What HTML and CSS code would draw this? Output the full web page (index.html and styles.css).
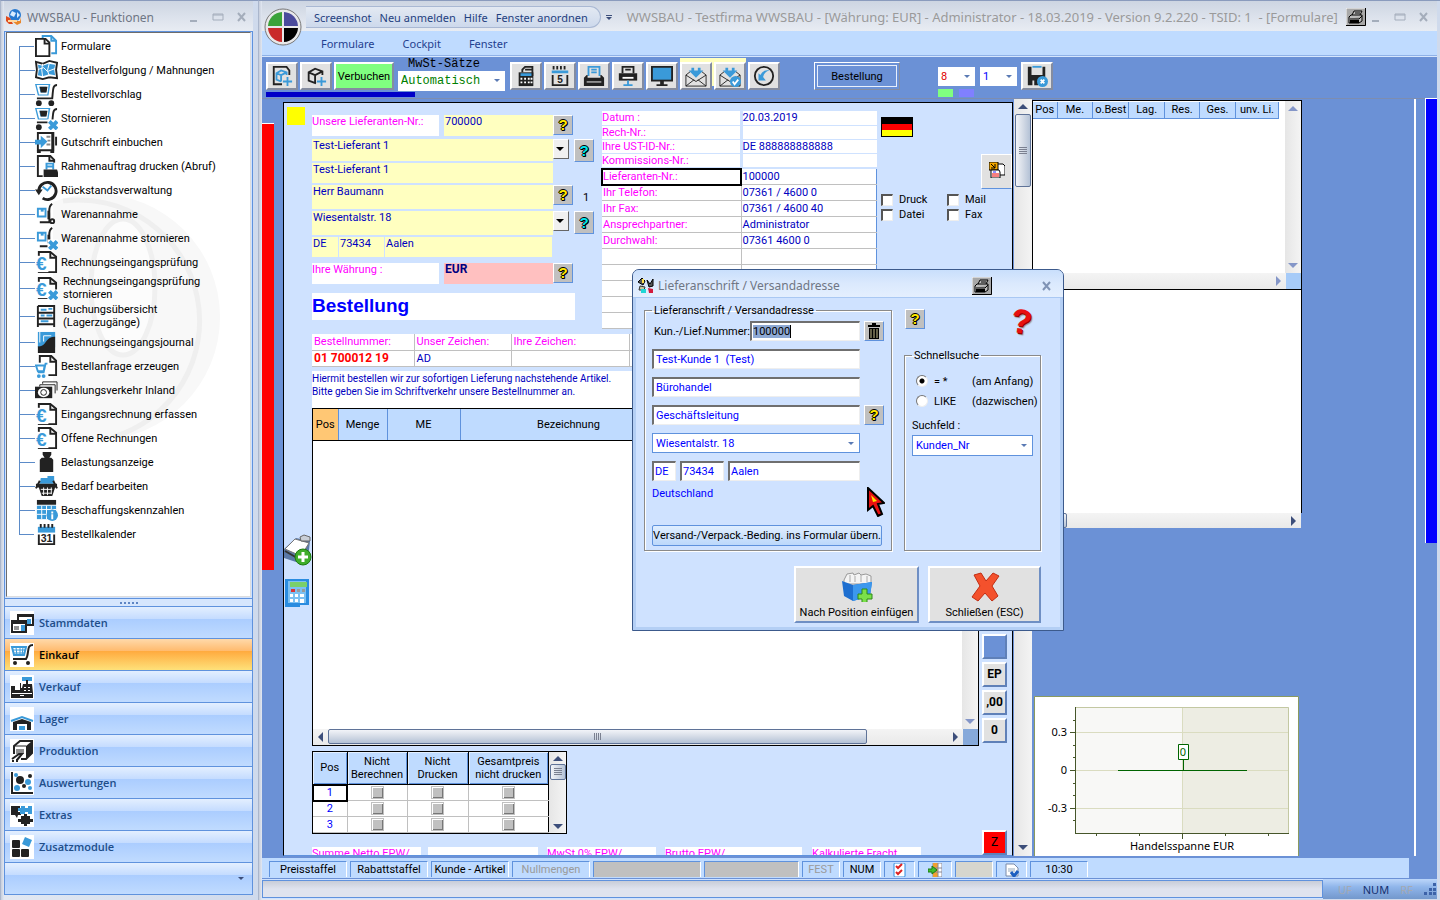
FILE: index.html
```html
<!DOCTYPE html>
<html lang="de">
<head>
    <meta charset="UTF-8">
    <meta name="viewport" content="width=device-width, initial-scale=1.0">
    <title>WWSBAU</title>
    <link rel="stylesheet" href="styles.css">
</head>
<body>
    <!-- Icon sprite -->
    <svg class="sprite" aria-hidden="true">
        <symbol id="i-docs" viewBox="0 0 24 24"><path class="bs" d="M8 3V1h9l5 5v13h-5"/><path class="bs" d="M17 1v5h5"/><path class="ws" d="M1 4h10l4 4v14H1z"/><path class="ds" d="M10 4v5h5"/></symbol>
        <symbol id="i-map" viewBox="0 0 24 24"><path class="ws" d="M1 3l7 2 7-3 8 2-1 7 1 9-8-1-7 2-7-2 1-8z"/><path class="b" d="M3 6l5 1 6-2 7 1-1 5 1 6-6-1-7 2-5-1 1-6z"/><path class="wl" d="M8 5l-1 6 1 8M15 4l-2 8 2 6M3 11l6-2 4 4 8-3"/></symbol>
        <symbol id="i-cart2" viewBox="0 0 24 24"><path class="b" d="M0 1h16l-2 12H3z"/><path class="wl2" d="M3 3h10l-1 8H5z"/><path class="d" d="M5 4h8l-1 6H6z"/><path class="ds" d="M23 2c-5 0-4 6-5 14H2"/><circle class="d" cx="4" cy="21" r="3"/><circle class="d" cx="17" cy="21" r="3"/></symbol>
        <symbol id="i-x" viewBox="0 0 24 24"><path class="w" d="M13 13h11v11H13z"/><path class="xs" d="M15 15l8 8M23 15l-8 8"/></symbol>
        <symbol id="i-credit" viewBox="0 0 24 24"><path class="ds" d="M3 2h16v18H3z"/><path class="d" d="M17 1h3v20h-3zM21 6h2v9h-2zM2 20h4v3H2zM16 20h4v3h-4z"/><path class="gl" d="M12 6h4M13 10h3M12 14h4"/><path class="b" d="M0 9h6V5l7 6-7 7v-4H0z"/></symbol>
        <symbol id="i-docprint" viewBox="0 0 24 24"><path class="ws" d="M3 1h13l4 4v17H3z"/><path class="ds" d="M15 1v5h5"/><path class="w" d="M8 8h16v16H8z"/><path class="bs" d="M12 15V9h7v6M13 12h5"/><path class="d" d="M9 15h14l1 3v5H9z"/></symbol>
        <symbol id="i-clock" viewBox="0 0 24 24"><path class="d3" d="M4 13a9 9 0 1 1 4 7"/><path class="d" d="M0 11h8l-4 6z"/><path class="bs" d="M8 8l5 4 4-5"/></symbol>
        <symbol id="i-truck" viewBox="0 0 24 24"><path class="bs" d="M3 6h8v8H3z"/><path class="b" d="M6 6h3v3H6z"/><path class="ds" d="M18 1c-4 2-3 6-3 10v9H5"/><path class="ds" d="M14 8v9"/><circle class="ds" cx="18" cy="19" r="2"/></symbol>
        <symbol id="i-euro" viewBox="0 0 24 24"><path class="ws" d="M4 1h12l6 5v16H4z"/><path class="ds" d="M16 1v6h6"/><path class="w" d="M1 5h13v17H1z"/></symbol>
        <symbol id="i-rack" viewBox="0 0 24 24"><path class="ws" d="M3 1h17v22M3 1v22M3 8h17M3 14h17M3 20h17"/><path class="bs" d="M6 5h6M14 4h4M6 11h4M12 11h6M6 17h8"/></symbol>
        <symbol id="i-journal" viewBox="0 0 24 24"><path class="b" d="M3 1h18v16H3z"/><path class="wl" d="M5 1v11M9 5h8M9 5v6"/><path class="d" d="M3 16c9 1 8-11 18-10v17H3z"/></symbol>
        <symbol id="i-cartdoc" viewBox="0 0 24 24"><path class="ws" d="M5 1h12l5 5v15H5z"/><path class="ds" d="M16 1v6h6"/><path class="w" d="M0 8h14v16H0z"/><path class="bs" d="M1 11h9l-1 6H3zM13 9h-2l-2 9H3"/><circle class="b" cx="4" cy="22" r="2"/><circle class="b" cx="9" cy="22" r="2"/></symbol>
        <symbol id="i-money" viewBox="0 0 24 24"><path class="dl" d="M5 8V6h16v9M8 5V3h15v9"/><path class="d" d="M0 8h18v12H0z"/><ellipse class="w" cx="9" cy="14" rx="6" ry="5"/><circle class="dl" cx="9" cy="14" r="3"/></symbol>
        <symbol id="i-weight" viewBox="0 0 24 24"><path class="d" d="M8 1h9v3l-2 3h2l2 2v13H5V9l2-2h3L8 4z"/></symbol>
        <symbol id="i-basket" viewBox="0 0 24 24"><path class="b" d="M6 3h7V1h7v8H5z"/><path class="ds" d="M5 6l-4 8M19 6l4 8"/><path class="d" d="M1 9h22v4H1zM4 13h17l-3 9H7z"/><path class="wl" d="M6 15h12M7 19h10M9 13v8M13 13v8M17 13v7"/></symbol>
        <symbol id="i-table" viewBox="0 0 24 24"><path class="d" d="M2 1h20v5H2z"/><path class="b" d="M2 7h20v14H2z"/><path class="wl" d="M2 11h20M2 16h20M7 7v14M12 7v14M17 7v14"/><circle class="b" cx="18" cy="17" r="6"/></symbol>
        <symbol id="i-cal" viewBox="0 0 24 24"><path class="b" d="M3 4h18v6H3z"/><path class="ds" d="M6 1v4M10 1v4M14 1v4M18 1v4M4 12v10h16V12"/></symbol>
        <symbol id="i-cards" viewBox="0 0 24 24"><path class="ws" d="M8 4h15v10H8z"/><path class="d" d="M8 3h15v3H8z"/><path class="b" d="M17 8h4v5h-4z"/><path class="ws" d="M2 10h14v11H2z"/><path class="d" d="M2 10h14v3H2z"/><path class="b" d="M11 14h4v6h-4z"/><path class="dl" d="M4 16h5M4 18h5"/></symbol>
        <symbol id="i-cart" viewBox="0 0 24 24"><path class="bs" d="M2 4h14l-2 8H4z"/><path class="bl" d="M3 7h12M4 10h11M6 4l1 9M10 4v9M13 4l-1 9"/><path class="ds" d="M23 2c-6 0-4 5-6 12l-1 2H3"/><circle class="d" cx="5" cy="20" r="2"/><circle class="d" cx="18" cy="20" r="2"/></symbol>
        <symbol id="i-register" viewBox="0 0 24 24"><path class="bs" d="M13 3h8v2h-8z"/><path class="d" d="M16 5h2v4h-2zM1 11h5V8h5v5h1l1-4h9l1 9v5H1z"/><path class="w" d="M5 6h5v9H5zM14 12h2v1h-2zM18 12h2v1h-2zM14 15h2v1h-2zM18 15h2v1h-2zM2 18h20v1H2zM10 20h4v1h-4z"/></symbol>
        <symbol id="i-house" viewBox="0 0 24 24"><path class="bs" d="M1 14l11-4 11 4"/><path class="d" d="M3 15l9-3 9 3v8H3z"/><path class="w" d="M7 17h10v6H7z"/><path class="b" d="M9 19h6v4H9z"/></symbol>
        <symbol id="i-machine" viewBox="0 0 24 24"><path class="ws" d="M4 7l6-5h12v12l-6 6H4z"/><path class="d" d="M16 7l6-5v12l-6 6z"/><path class="dl" d="M4 7h12"/><path class="dl" d="M7 10v5M9 10v5M11 10v5M13 10v5"/><path class="w" d="M1 15h10v9H1z"/><path class="ds" d="M2 20l7-5h3l-5 6M3 21v2M7 20v3"/></symbol>
        <symbol id="i-bubbles" viewBox="0 0 24 24"><path class="ds" d="M2 1v21h21"/><circle class="d" cx="10" cy="9" r="4"/><circle class="b" cx="6" cy="4" r="2"/><circle class="b" cx="18" cy="11" r="3"/><circle class="d" cx="14" cy="15" r="2"/><circle class="b" cx="7" cy="17" r="3"/><circle class="d" cx="20" cy="5" r="2"/><circle class="b" cx="20" cy="17" r="2"/></symbol>
        <symbol id="i-puzzle" viewBox="0 0 24 24"><path class="d" d="M1 3h9v3h-2v3h3v3H8l-1 3-2-3H1z"/><path class="b" d="M11 3h4v2h3V3h4v8h-4V9h-3v2h-5V8H8V5h3z"/><path class="d" d="M11 13h3v-2h3v2h3v3h3v3h-3v2h-3v2h-3v-2h-3v-2H8v-3h3z"/></symbol>
        <symbol id="i-blocks" viewBox="0 0 24 24"><rect class="d" x="2" y="5" width="8" height="8" rx="1"/><rect class="d" x="2" y="14" width="8" height="8" rx="1"/><rect class="d" x="11" y="14" width="8" height="8" rx="1"/><path class="b" d="M15 2l7 3-3 7-7-3z"/></symbol>
        <symbol id="i-box" viewBox="0 0 24 24"><path class="ds" d="M12 20L4 17V8l7-4 8 3v4M4 8l7 3v8M11 11l8-4"/><path class="bs" d="M18 13v10M13 18h10"/></symbol>
        <symbol id="i-boxdoc" viewBox="0 0 24 24"><path class="ds" d="M12 21H3V2h14l3 4v5"/><path class="bs" d="M11 18l-5-2V9l5-3 6 2v3M6 9l5 2v7M11 11l6-3M18 13v10M13 18h10"/></symbol>
        <symbol id="i-calc" viewBox="0 0 24 24"><path class="ds" d="M8 8V5l3-3h8v10M11 5h7"/><path class="d" d="M4 8h16v15H4z"/><path class="b" d="M6 9h12v3H6z"/><path class="w" d="M6 14h2v2H6zM10 14h2v2h-2zM14 14h2v2h-2zM6 18h2v2H6zM10 18h2v2h-2zM14 18h2v2h-2zM17 14h2v2h-2zM17 18h2v2h-2z"/></symbol>
        <symbol id="i-cal5" viewBox="0 0 24 24"><path class="b" d="M3 6h18v3H3z"/><path class="ds" d="M5 1v4M9 1v4M13 1v4M17 1v4M4 11v11h16V11"/></symbol>
        <symbol id="i-printer" viewBox="0 0 24 24"><path class="bs" d="M6 12V2h12v10M9 5h6M9 8h6"/><path class="d" d="M4 11h1v3h14v-3h1l3 3v9H1v-9z"/><path class="w" d="M4 18h16v1H4z"/></symbol>
        <symbol id="i-netprint" viewBox="0 0 24 24"><path class="ds" d="M6 9V2h12v7M9 5h6"/><path class="d" d="M2 9h20v8H2z"/><path class="w" d="M6 13h12v2H6z"/><path class="bs" d="M12 17v6M7 22h10"/></symbol>
        <symbol id="i-monitor" viewBox="0 0 24 24"><path class="d" d="M0 1h24v17H0zM10 18h4v3h4v2H6v-2h4z"/><path class="b" d="M2 3h20v13H2z"/></symbol>
        <symbol id="i-mail" viewBox="0 0 24 24"><path class="dm" d="M6 7L1 11v12h22V11l-5-4M1 11l11 7 11-7M1 23l9-7M23 23l-9-7"/><path class="b" d="M7 3h3v3h4V3h3v3h3l-8 8-8-8h3z"/></symbol>
        <symbol id="i-check" viewBox="0 0 24 24"><circle class="b" cx="18" cy="18" r="6"/><path class="wl2" d="M15 18l2 3 4-5"/></symbol>
        <symbol id="i-back" viewBox="0 0 24 24"><circle class="ds" cx="12" cy="12" r="10"/><path class="b" d="M6 9l2 2c3-5 6-6 10-5-4 1-6 3-7 7l3 4H6z"/></symbol>
        <symbol id="i-save" viewBox="0 0 24 24"><path class="d" d="M2 2h4v9h12V2h3v12l-8 8H9v-5H7v5H2z"/><path class="bs" d="M7 2h10"/><circle class="b" cx="18" cy="18" r="6"/><path class="wl2" d="M16 16l4 4M20 16l-4 4"/></symbol>
        <symbol id="i-stamp" viewBox="0 0 20 18"><path d="M0 0h20v18H0z" fill="#a8a8a8"/><path d="M0 17V0h20" fill="none" stroke="#fff"/><path d="M6 7l2-4h8l-2 4M9 5h5M3 9l2-2h11v6l-3 2H3zM4 11h9l3-3" fill="#bbb" stroke="#000"/><path d="M4 12h9v3H4z"/><path d="M0 17.500h19.500V0" fill="none" stroke="#000"/></symbol>
    </svg>

    <!-- Function tree window -->
    <aside class="window functions">
        <header class="titlebar">
            <svg class="globe" viewBox="0 0 16 16"><circle cx="9" cy="6" r="6" fill="#2779d0"/><path d="M6 2l4 2-2 4-4-2zM11 3l3 3-3 3z" fill="#d8ecff"/><path d="M0 7l4 2 3 6H3L0 12z" fill="#e04a1c"/><path d="M6 12h8l1-4v6l-4 2z" fill="#e9862a"/><path d="M2 11h9v2H2z" fill="#ffd9a0"/></svg>
            <h1>WWSBAU - Funktionen</h1>
            <div class="winbtns"><button aria-label="Minimieren"><svg viewBox="0 0 12 12"><path d="M2 10h7" /></svg></button><button aria-label="Maximieren"><svg viewBox="0 0 12 12"><path class="thin" d="M1 3h10v6H1zM1 4h10"/></svg></button><button aria-label="Schließen"><svg viewBox="0 0 12 12"><path d="M2 2l7 8M9 2l-7 8"/></svg></button></div>
        </header>
        <div class="functions-body">
            <div class="tree-panel">
                <svg class="watermark" viewBox="0 0 170 260"><circle cx="44" cy="130" r="123" fill="#f8f8f8"/><path d="M10 14A121 121 0 0 1 60 250" fill="none" stroke="#efefef" stroke-width="5"/><ellipse cx="70" cy="100" rx="32" ry="68" fill="#fcfcfc" stroke="#f0f0f0" stroke-width="5"/></svg>
                <ul class="tree">
                    <li><svg><use href="#i-docs"/></svg><a href="#">Formulare</a></li>
                    <li><svg><use href="#i-map"/></svg><a href="#">Bestellverfolgung / Mahnungen</a></li>
                    <li><svg><use href="#i-cart2"/></svg><a href="#">Bestellvorschlag</a></li>
                    <li><svg><use href="#i-cart2"/><use href="#i-x"/></svg><a href="#">Stornieren</a></li>
                    <li><svg><use href="#i-credit"/></svg><a href="#">Gutschrift einbuchen</a></li>
                    <li><svg><use href="#i-docprint"/></svg><a href="#">Rahmenauftrag drucken (Abruf)</a></li>
                    <li><svg><use href="#i-clock"/></svg><a href="#">Rückstandsverwaltung</a></li>
                    <li><svg><use href="#i-truck"/></svg><a href="#">Warenannahme</a></li>
                    <li><svg><use href="#i-truck"/><use href="#i-x"/></svg><a href="#">Warenannahme stornieren</a></li>
                    <li><svg viewBox="0 0 24 24"><use href="#i-euro"/><text class="bt" x="1" y="20">€</text></svg><a href="#">Rechnungseingangsprüfung</a></li>
                    <li class="double"><svg viewBox="0 0 24 24"><use href="#i-euro"/><text class="bt" x="1" y="20">€</text><use href="#i-x"/></svg><a href="#">Rechnungseingangsprüfung<br>stornieren</a></li>
                    <li class="double"><svg><use href="#i-rack"/></svg><a href="#">Buchungsübersicht<br>(Lagerzugänge)</a></li>
                    <li><svg><use href="#i-journal"/></svg><a href="#">Rechnungseingangsjournal</a></li>
                    <li><svg><use href="#i-cartdoc"/></svg><a href="#">Bestellanfrage erzeugen</a></li>
                    <li><svg><use href="#i-money"/></svg><a href="#">Zahlungsverkehr Inland</a></li>
                    <li><svg viewBox="0 0 24 24"><use href="#i-euro"/><text class="bt" x="1" y="20">€</text></svg><a href="#">Eingangsrechnung erfassen</a></li>
                    <li><svg viewBox="0 0 24 24"><use href="#i-euro"/><text class="bt" x="1" y="20">€</text></svg><a href="#">Offene Rechnungen</a></li>
                    <li><svg><use href="#i-weight"/></svg><a href="#">Belastungsanzeige</a></li>
                    <li><svg><use href="#i-basket"/></svg><a href="#">Bedarf bearbeiten</a></li>
                    <li><svg viewBox="0 0 24 24"><use href="#i-table"/><path class="wl2" d="M18 16v5M18 13v2"/></svg><a href="#">Beschaffungskennzahlen</a></li>
                    <li><svg viewBox="0 0 24 24"><use href="#i-cal"/><text class="dt" x="6" y="20">31</text></svg><a href="#">Bestellkalender</a></li>
                </ul>
            </div>
            <div class="splitter"><i></i><i></i><i></i><i></i><i></i></div>
            <nav class="modules">
                <a href="#"><svg><use href="#i-cards"/></svg>Stammdaten</a>
                <a href="#" class="active"><svg><use href="#i-cart"/></svg>Einkauf</a>
                <a href="#"><svg><use href="#i-register"/></svg>Verkauf</a>
                <a href="#"><svg><use href="#i-house"/></svg>Lager</a>
                <a href="#"><svg><use href="#i-machine"/></svg>Produktion</a>
                <a href="#"><svg><use href="#i-bubbles"/></svg>Auswertungen</a>
                <a href="#"><svg><use href="#i-puzzle"/></svg>Extras</a>
                <a href="#"><svg><use href="#i-blocks"/></svg>Zusatzmodule</a>
                <div class="modules-foot"><span class="tri down small"></span></div>
            </nav>
        </div>
    </aside>

    <!-- Main window -->
    <main class="window main">
        <svg class="orb" viewBox="0 0 38 38"><circle cx="19" cy="19" r="18" fill="#e8e8ea" stroke="#777"/><path d="M18 4v14H4A15 15 0 0 1 18 4z" fill="#3ba23a"/><path d="M20 4v14h14A15 15 0 0 0 20 4z" fill="#4a4a9c"/><path d="M18 34V20H4a15 15 0 0 0 14 14z" fill="#c92a2a"/><path d="M20 34V20h14a15 15 0 0 1-14 14z"/></svg>
        <header class="titlebar">
            <nav class="quick">
                <a href="#">Screenshot</a><a href="#">Neu anmelden</a><a href="#">Hilfe</a><a href="#">Fenster anordnen</a>
            </nav>
            <span class="quick-more"><span class="tri down small"></span></span>
            <h1>WWSBAU - Testfirma WWSBAU - [Währung: EUR] - Administrator - 18.03.2019 - Version 9.2.220 - TSID: 1 &nbsp;- [Formulare]</h1>
            <svg class="stamp"><use href="#i-stamp"/></svg>
            <div class="winbtns"><button aria-label="Minimieren"><svg viewBox="0 0 12 12"><path d="M2 10h7" /></svg></button><button aria-label="Maximieren"><svg viewBox="0 0 12 12"><path class="thin" d="M1 3h10v6H1zM1 4h10"/></svg></button><button aria-label="Schließen"><svg viewBox="0 0 12 12"><path d="M2 2l7 8M9 2l-7 8"/></svg></button></div>
        </header>
        <nav class="menubar">
            <a href="#">Formulare</a><a href="#">Cockpit</a><a href="#">Fenster</a>
        </nav>

        <div class="toolbar">
            <div class="tool-group">
                <button class="tool" aria-label="Artikelbeleg neu"><svg><use href="#i-boxdoc"/></svg></button>
                <button class="tool" aria-label="Artikel neu"><svg><use href="#i-box"/></svg></button>
                <button class="tool book">Verbuchen</button>
                <div class="progress"></div>
            </div>
            <div class="vat">
                <label for="vat">MwSt-Sätze</label>
                <div class="select"><select id="vat"><option>Automatisch</option></select></div>
            </div>
            <div class="tool-group">
                <button class="tool" aria-label="Rechner"><svg><use href="#i-calc"/></svg></button>
                <button class="tool" aria-label="Kalender"><svg viewBox="0 0 24 24"><use href="#i-cal5"/><text class="dt" x="9" y="20">5</text></svg></button>
                <button class="tool" aria-label="Drucken"><svg><use href="#i-printer"/></svg></button>
                <button class="tool" aria-label="Netzwerkdruck"><svg><use href="#i-netprint"/></svg></button>
                <button class="tool" aria-label="Vorschau"><svg><use href="#i-monitor"/></svg></button>
                <button class="tool marked" aria-label="Mail"><svg><use href="#i-mail"/></svg></button>
                <button class="tool marked" aria-label="Mail senden"><svg><use href="#i-mail"/><use href="#i-check"/></svg></button>
                <button class="tool" aria-label="Zurück"><svg><use href="#i-back"/></svg></button>
            </div>
            <button class="order-type">Bestellung</button>
            <div class="counters">
                <div class="select red"><select aria-label="Anzahl"><option>8</option></select></div>
                <div class="select"><select aria-label="Kopien"><option>1</option></select></div>
                <div class="chips"><i class="green"></i><i class="violet"></i></div>
            </div>
            <button class="tool" aria-label="Speichern und schließen"><svg><use href="#i-save"/></svg></button>
        </div>

        <div class="workspace">
            <div class="gutter"><div class="redbar"></div></div>
            <section class="form">
                <div class="form-top">
                    <div class="marker"></div>
                    <div class="address">
                        <div class="row h24"><span class="lbl">Unsere Lieferanten-Nr.:</span><span class="fld mid">700000</span><button class="hint">?</button></div>
                        <div class="row h24"><span class="fld full">Test-Lieferant 1</span><button class="drop" aria-label="Auswahl"><span class="tri down"></span></button><button class="hint cyan">?</button></div>
                        <div class="row h22"><span class="fld full">Test-Lieferant 1</span></div>
                        <div class="row h26"><span class="fld full">Herr Baumann</span><button class="hint">?</button><span class="count">1</span></div>
                        <div class="row h26"><span class="fld full">Wiesentalstr. 18</span><button class="drop" aria-label="Auswahl"><span class="tri down"></span></button><button class="hint cyan">?</button></div>
                        <div class="row city"><span class="fld">DE</span><span class="fld">73434</span><span class="fld">Aalen</span></div>
                        <div class="row currency"><span class="lbl">Ihre Währung :</span><span class="fld mid pink">EUR</span><button class="hint">?</button></div>
                        <h2>Bestellung</h2>
                    </div>
                    <div class="info">
                        <table class="info-a">
                            <tr><th>Datum :</th><td>20.03.2019</td></tr>
                            <tr><th>Rech-Nr.:</th><td></td></tr>
                            <tr><th>Ihre UST-ID-Nr.:</th><td>DE 888888888888</td></tr>
                            <tr><th>Kommissions-Nr.:</th><td></td></tr>
                        </table>
                        <table class="info-b">
                            <tr><th class="focus">Lieferanten-Nr.:</th><td>100000</td></tr>
                            <tr><th>Ihr Telefon:</th><td>07361 / 4600 0</td></tr>
                            <tr><th>Ihr Fax:</th><td>07361 / 4600 40</td></tr>
                            <tr><th>Ansprechpartner:</th><td>Administrator</td></tr>
                            <tr><th>Durchwahl:</th><td>07361 4600 0</td></tr>
                            <tr><th></th><td></td></tr>
                            <tr><th></th><td></td></tr>
                            <tr><th></th><td></td></tr>
                            <tr><th></th><td></td></tr>
                            <tr><th></th><td></td></tr>
                        </table>
                    </div>
                    <div class="side">
                        <div class="flag"><i></i><i></i><i></i></div>
                        <button class="docbtn" aria-label="Beleg kopieren"><svg viewBox="0 0 16 16"><path d="M6 2h8l2 2v9h-6z" fill="#fff" stroke="#000"/><path d="M0 0h9v8H0z" fill="#f5a800" stroke="#000"/><path d="M2 2l4 4M6 2v4H2" stroke="#000" fill="none"/><path d="M2 8h8l1 2v6H2z" fill="#fff" stroke="#000"/><path d="M3 12h7M3 14h7" stroke="#e00"/><path d="M4 10h3" stroke="#22f"/></svg></button>
                        <div class="checks">
                            <label><input type="checkbox">Druck</label><label><input type="checkbox">Mail</label>
                            <label><input type="checkbox">Datei</label><label><input type="checkbox">Fax</label>
                        </div>
                    </div>
                </div>
                <div class="form-main">
                    <div class="form-icons">
                        <svg viewBox="0 0 28 32"><path d="M0 15L12 4l14 3-2 18-12 3L0 24z" fill="#5b79a8"/><path d="M1 15L11 5l14 4-8 13z" fill="#fff" stroke="#777"/><path d="M16 3l4-2 6 2v4h-9z" fill="#c9ced6" stroke="#666"/><path d="M1 17l14 8" stroke="#333" stroke-width="2"/><circle cx="19" cy="23" r="8" fill="#3fae2a" stroke="#1d7a12"/><path d="M19 18v10M14 23h10" stroke="#fff" stroke-width="3"/></svg>
                        <svg viewBox="0 0 24 28"><path d="M0 0h24v26H15v2H0z" fill="#2a8ce0"/><path d="M3 2h18v22H3z" fill="#7cc0f2"/><path d="M5 3h17v5H5z" fill="#7ad06a"/><path d="M6 10h4v3H6z" fill="#d33"/><path d="M12 10h3v3h-3zM17 10h3v3h-3z" fill="#9a9a9a"/><path d="M5 15h3v3H5zM10 15h3v3h-3zM15 15h4v3h-4zM5 20h3v3H5zM10 20h3v3h-3zM15 20h4v4h-4z" fill="#fff"/></svg>
                    </div>
                    <div class="form-content">
                        <table class="refs">
                            <tr><th>Bestellnummer:</th><th>Unser Zeichen:</th><th>Ihre Zeichen:</th><th></th></tr>
                            <tr><td class="strong">01 700012 19</td><td>AD</td><td></td><td></td></tr>
                        </table>
                        <p class="intro">Hiermit bestellen wir zur sofortigen Lieferung nachstehende Artikel.<br>Bitte geben Sie im Schriftverkehr unsere Bestellnummer an.</p>
                        <div class="items">
                            <table>
                                <tr><th class="pos">Pos</th><th class="qty">Menge</th><th class="unit">ME</th><th class="name">Bezeichnung</th><th></th></tr>
                            </table>
                            <div class="items-body"><div class="vbar"><span></span><span class="tri down pale"></span></div></div>
                            <div class="hbar"><span class="tri left"></span><div class="thumb"><i></i></div><span class="tri right"></span><b></b></div>
                        </div>
                        <div class="flags">
                            <table>
                                <tr><th class="f-pos">Pos</th><th class="f-a">Nicht<br>Berechnen</th><th class="f-b">Nicht<br>Drucken</th><th class="f-c">Gesamtpreis<br>nicht drucken</th></tr>
                                <tr><td class="focus">1</td><td><input type="checkbox" aria-label="1 nicht berechnen"></td><td><input type="checkbox" aria-label="1 nicht drucken"></td><td><input type="checkbox" aria-label="1 Gesamtpreis"></td></tr>
                                <tr><td>2</td><td><input type="checkbox" aria-label="2 nicht berechnen"></td><td><input type="checkbox" aria-label="2 nicht drucken"></td><td><input type="checkbox" aria-label="2 Gesamtpreis"></td></tr>
                                <tr><td>3</td><td><input type="checkbox" aria-label="3 nicht berechnen"></td><td><input type="checkbox" aria-label="3 nicht drucken"></td><td><input type="checkbox" aria-label="3 Gesamtpreis"></td></tr>
                            </table>
                            <div class="vbar dark"><span class="tri up"></span><div class="thumb short"><i></i></div><span class="tri down"></span></div>
                        </div>
                        <div class="sums"><span>Summe Netto EPW/</span><span></span><span>MwSt 0% EPW/</span><span>Brutto EPW/</span><span>Kalkulierte Fracht</span></div>
                    </div>
                    <div class="form-side">
                        <button class="sq blue" aria-label="Farbe"></button>
                        <button class="sq">EP</button>
                        <button class="sq">,00</button>
                        <button class="sq">0</button>
                        <button class="sq redsq">Z</button>
                    </div>
                </div>
            </section>
            <div class="vbar main-scroll dark"><span class="tri up"></span><div class="thumb"><i></i></div><span class="tri down"></span></div>
            <section class="stock">
                <div class="stock-table">
                    <div class="stock-area">
                        <table><tr><th>Pos</th><th>Me.</th><th>o.Best</th><th>Lag.</th><th>Res.</th><th>Ges.</th><th>unv. Li.</th></tr></table>
                        <div class="vbar"><span class="tri up pale"></span><span class="tri down pale"></span></div>
                    </div>
                    <div class="hbar"><span class="tri right pale"></span><b></b></div>
                </div>
                <div class="stock-blank"></div>
                <div class="hbar stock-scroll"><div class="thumb"></div><span class="tri right"></span></div>
                <svg class="chart" viewBox="0 0 265 160">
                    <path d="M0.500 160V0.500h264V160" fill="#fff" stroke="#8a9a5f"/>
                    <path d="M41 11h108v126H41z" fill="#f8f8f6"/><path d="M149 11h106v126H149z" fill="#edede3"/>
                    <path d="M41 36.500h214M41 74.500h214M41 112.500h214M148.500 11v126" stroke="#dadcc0"/>
                    <path d="M41 11.500h213.500V137" fill="none" stroke="#c3c8a2"/>
                    <path d="M41.500 11v126M41 137.500h214M36 36.500h5M36 74.500h5M36 112.500h5M39 24.500h2M39 49.500h2M39 61.500h2M39 87.500h2M39 99.500h2M39 124.500h2M62.500 137v3M105.500 137v3M148.500 137v6M191.500 137v3M234.500 137v3" stroke="#46562a"/>
                    <path d="M84 74.500h129M149.500 63v11" stroke="#006400"/>
                    <path d="M144.500 48.500h10v15h-10z" fill="#fff" stroke="#006400"/>
                    <text x="149" y="60" text-anchor="middle" class="green">0</text>
                    <text x="33" y="40" text-anchor="end">0.3</text><text x="33" y="78" text-anchor="end">0</text><text x="33" y="116" text-anchor="end">-0.3</text>
                    <text x="148" y="154" text-anchor="middle">Handelsspanne EUR</text>
                </svg>
            </section>
            <div class="edge"><div class="bluebar"></div></div>
        </div>

        <div class="tabs">
            <button class="w78">Preisstaffel</button>
            <button class="w78">Rabattstaffel</button>
            <button class="w78">Kunde - Artikel</button>
            <button class="w78" disabled>Nullmengen</button>
            <span class="cell w108 gray"></span>
            <span class="cell w95 gray"></span>
            <span class="cell w38 off">FEST</span>
            <span class="cell w38">NUM</span>
            <span class="cell w31"><svg viewBox="0 0 14 14"><rect x="1" y="0" width="11" height="14" rx="1" fill="#fff" stroke="#2a8ce0"/><path d="M3 3l2 2 4-4M3 9l2 2 4-4" stroke="#d22" stroke-width="2" fill="none"/></svg></span>
            <span class="cell w34"><svg viewBox="0 0 14 14"><path d="M5 0h9v14H5z" fill="#fff" stroke="#889"/><path d="M5 0h5v14H5z" fill="#f0a030"/><path d="M10 0v14M5 5h9M5 9h9" stroke="#889"/><path d="M0 6h4V3l5 4-5 4V9H0z" fill="#3fbf2f" stroke="#1d7a12"/></svg></span>
            <span class="cell w38 beige"></span>
            <span class="cell w31"><svg viewBox="0 0 14 14"><path d="M1 1h8l4 4v8H1z" fill="#fff" stroke="#7a8aa8"/><path d="M3 6h7M3 8h7" stroke="#9ab"/><path d="M6 9l3 4 4-5" stroke="#1c5fc0" stroke-width="3" fill="none"/></svg></span>
            <span class="cell w58">10:30</span>
        </div>
        <footer class="status">
            <div class="message"></div>
            <div class="keys"><span class="dim">UF</span><span>NUM</span><span class="dim">RF</span><svg viewBox="0 0 12 12"><path d="M9 0h3v3H9zM5 5h3v3H5zM9 5h3v3H9zM0 9h3v3H0zM5 9h3v3H5zM9 9h3v3H9z" fill="#3c62a8"/></svg></div>
        </footer>
    </main>

    <!-- Delivery address dialog -->
    <div class="dialog" role="dialog" aria-labelledby="dialog-title">
        <header class="dialog-title">
            <svg class="dlgicon" viewBox="0 0 16 16"><path d="M0 4l4-4 3 3-2 4zM9 2l3 4 3-5v7l-4 1z" fill="#555" stroke="#000"/><path d="M2 8l5 1-1 3H1z" fill="#c9c9a0" stroke="#333"/><path d="M3 11h5v4H3z" fill="#1fd6d6"/><path d="M10 10l5 1v4h-4z" fill="#d31a3c"/><path d="M4 1h2v4H4z" fill="#ffe34a"/></svg>
            <h2 id="dialog-title">Lieferanschrift / Versandadresse</h2>
            <svg class="stamp"><use href="#i-stamp"/></svg>
            <button class="close" aria-label="Schließen"><svg viewBox="0 0 12 12"><path d="M2 2l7 8M9 2l-7 8"/></svg></button>
        </header>
        <div class="dialog-body">
            <fieldset class="addr">
                <legend>Lieferanschrift / Versandadresse</legend>
                <div class="line first"><label for="nr">Kun.-/Lief.Nummer:</label><div class="input num"><mark>100000</mark><input id="nr" type="text"></div><button class="hint" aria-label="Löschen"><svg viewBox="0 0 14 16"><path d="M5 0h4v2h4v2H1V2h4zM2 5h10v11H2z"/><path d="M4 6v9M7 6v9M10 6v9" stroke="#c8c090"/></svg></button></div>
                <div class="line"><input class="input" type="text" value="Test-Kunde 1  (Test)" aria-label="Name"></div>
                <div class="line"><input class="input" type="text" value="Bürohandel" aria-label="Branche"></div>
                <div class="line"><input class="input" type="text" value="Geschäftsleitung" aria-label="Abteilung"><button class="hint">?</button></div>
                <div class="line"><div class="select wide"><select aria-label="Straße"><option>Wiesentalstr. 18</option></select></div></div>
                <div class="line place"><input class="input" type="text" value="DE" aria-label="Land"><input class="input" type="text" value="73434" aria-label="PLZ"><input class="input" type="text" value="Aalen" aria-label="Ort"></div>
                <p>Deutschland</p>
                <button class="transfer">Versand-/Verpack.-Beding. ins Formular übern.</button>
            </fieldset>
            <div class="dialog-side">
                <div class="help"><button class="hint">?</button><span class="bighelp">?</span></div>
                <fieldset class="search">
                    <legend>Schnellsuche</legend>
                    <label class="opt"><input type="radio" name="mode" checked><span>= *</span>(am Anfang)</label>
                    <label class="opt"><input type="radio" name="mode"><span>LIKE</span>(dazwischen)</label>
                    <label class="cap" for="field">Suchfeld :</label>
                    <div class="select wide"><select id="field"><option>Kunden_Nr</option></select></div>
                </fieldset>
            </div>
        </div>
        <div class="dialog-actions">
            <button class="big insert"><svg viewBox="0 0 32 30"><path d="M3 8l3-6 6-1 1 2 5-2 2 2 5-1 5 2v8H3z" fill="#f4f4f4" stroke="#999"/><path d="M9 3v7M14 4v6M20 3v7M26 4v6" stroke="#aaa"/><path d="M1 9l11 4 19-3-2 14-17 5-9-5z" fill="#1e6fd0"/><path d="M12 13l19-3-2 14-17 5z" fill="#3c98ee"/><path d="M21 17h5v5h5v5h-5v4h-5v-4h-4v-5h4z" fill="#7be04a" stroke="#2c8a16"/></svg>Nach Position einfügen</button>
            <button class="big quit"><svg viewBox="0 0 30 30"><path d="M4 3l7-2 5 8 7-8 6 3-7 10 6 10-6 5-7-8-7 8-6-4 8-11z" fill="#f4512c" stroke="#c22d12"/></svg>Schließen (ESC)</button>
        </div>
        <svg class="cursor" viewBox="0 0 18 30"><path d="M1 1l16 15-6 1 4 10-4 2-5-10-5 4z" fill="#e81010" stroke="#000" stroke-width="2"/><path d="M4 8l6 6-4 1z" fill="#ffe000"/></svg>
    </div>
</body>
</html>
```
FILE: styles.css
```css
/* Basic reset and global styles */
* {
    margin: 0;
    padding: 0;
    box-sizing: border-box;
}
body {
    font-family: Roboto, "Liberation Sans", sans-serif;
    font-size: 11px;
    line-height: 13px;
    color: #000;
    background: #e4e8ef;
    display: grid;
    grid-template-columns: 258px minmax(0, 1fr);
    height: 100vh;
    overflow: hidden;
    position: relative;
}
button, input, select {
    font: inherit;
    color: inherit;
    border: 0;
    background: none;
    border-radius: 0;
}
a {
    color: inherit;
    text-decoration: none;
}
table {
    border-collapse: collapse;
    table-layout: fixed;
}
th {
    font-weight: normal;
    text-align: left;
}
.sprite {
    position: absolute;
    width: 0;
    height: 0;
}
/* Icon colours */
.d { fill: #222; }
.b { fill: #3a9ad9; }
.w { fill: #fff; }
.ds { fill: none; stroke: #222; stroke-width: 2; }
.dm { fill: none; stroke: #222; }
.d3 { fill: none; stroke: #222; stroke-width: 3; }
.dl { fill: none; stroke: #222; }
.gl { fill: none; stroke: #888; stroke-width: 2; }
.ws { fill: #fff; stroke: #222; stroke-width: 2; }
.bs { fill: none; stroke: #3a9ad9; stroke-width: 2; }
.bl { fill: none; stroke: #3a9ad9; }
.xs { fill: none; stroke: #3a9ad9; stroke-width: 4; }
.wl { fill: none; stroke: #fff; }
.wl2 { fill: none; stroke: #fff; stroke-width: 2; }
.bt { fill: #3a9ad9; font: bold 20px "Liberation Sans", sans-serif; }
.dt { fill: #222; font: bold 11px "Liberation Sans", sans-serif; }

/* Windows */
.window {
    display: flex;
    flex-direction: column;
    min-height: 0;
    background: linear-gradient(90deg, #c6cddb, #e2e8f2 3px, #cfdaec 100%);
    border-top: 1px solid #8a9bbd;
    border-left: 1px solid #aab6cc;
}
.titlebar {
    flex: 0 0 30px;
    display: flex;
    align-items: center;
    background: linear-gradient(#cdd5e2, #dbe1eb 50%, #e8ecf3);
    font-family: "Noto Sans", sans-serif;
}
.titlebar h1 {
    font-size: 12px;
    font-weight: normal;
    white-space: nowrap;
    flex: 1;
}
.main .titlebar h1 {
    font-size: 13px;
    min-width: 0;
    color: #9a9a9a;
}
.winbtns {
    display: flex;
    gap: 12px;
}
.winbtns button, .close {
    width: 12px;
    height: 12px;
}
.winbtns svg, .close svg {
    display: block;
    width: 12px;
    height: 12px;
    fill: none;
    stroke: #a4adbb;
    stroke-width: 2;
}
.winbtns .thin {
    stroke-width: 1px;
}
.stamp {
    width: 20px;
    height: 18px;
}

/* Function tree */
.functions {
    padding: 0 5px 5px 3px;
}
.functions .titlebar {
    padding: 2px 5px 0 2px;
    gap: 5px;
}
.functions .titlebar h1 {
    color: #6f7684;
}
.globe {
    width: 16px;
    height: 16px;
}
.functions-body {
    flex: 1;
    min-height: 0;
    display: flex;
    flex-direction: column;
    border: 1px solid #5f92dd;
    background: #cfe2ff;
}
.tree-panel {
    flex: 1;
    min-height: 0;
    overflow: hidden;
    position: relative;
    background: #fff;
    border: 1px solid #6d6d6d;
    border-right-color: #ddd;
    border-bottom-color: #ddd;
    margin: 0 1px 1px;
}
.watermark {
    position: absolute;
    left: 46px;
    top: 154px;
    width: 170px;
    height: 260px;
}
.tree {
    list-style: none;
    position: relative;
    padding: 1px 0 0 12px;
}
.tree li {
    height: 24px;
    display: flex;
    align-items: center;
    background: linear-gradient(#5b8bc8, #5b8bc8) 0 12px / 15px 1px no-repeat;
    border-left: 1px solid #5b8bc8;
    padding-left: 15px;
    line-height: 13px;
}
.tree li:first-child, .tree li:last-child {
    border-left: 0;
    padding-left: 16px;
    background: linear-gradient(#5b8bc8, #5b8bc8) 0 12px / 15px 1px no-repeat, linear-gradient(#5b8bc8, #5b8bc8) 0 100% / 1px 12px no-repeat;
}
.tree li:last-child {
    background-position: 0 12px, 0 0;
}
.tree li.double {
    height: 28px;
    background-position: 0 14px;
}
.tree svg {
    width: 23px;
    height: 23px;
    margin-right: 3px;
}
.tree .double a {
    padding-left: 2px;
}
.splitter {
    flex: 0 0 8px;
    display: flex;
    justify-content: center;
    align-items: center;
    gap: 2px;
    border-top: 1px solid #5f92dd;
    background: #d6e6fd;
}
.splitter i {
    width: 2px;
    height: 2px;
    background: #5f86c4;
}
.modules a, .modules-foot {
    height: 32px;
    display: flex;
    align-items: center;
    gap: 5px;
    padding-left: 5px;
    border-top: 1px solid #5f92dd;
    background: linear-gradient(#e3efff, #c5dcff 38%, #abcdff 40%, #c0dbff);
    font-family: "Open Sans", "Noto Sans", sans-serif;
    font-weight: 600;
    color: #204d89;
}
.modules a.active {
    color: #000;
    background: linear-gradient(#ffd9aa, #ffbb6e 38%, #ffab3f 40%, #fee17a);
}
.modules svg {
    width: 24px;
    height: 24px;
    background: #fff;
}
.modules-foot {
    justify-content: flex-end;
    padding-right: 8px;
}

/* Arrows */
.tri {
    width: 0;
    height: 0;
    border: 5px solid transparent;
    color: #3c4e7a;
}
.tri.down { border-top-color: currentColor; border-bottom: 0; }
.tri.up { border-bottom-color: currentColor; border-top: 0; }
.tri.left { border-right-color: currentColor; border-left: 0; }
.tri.right { border-left-color: currentColor; border-right: 0; }
.tri.small { border-width: 3px 3px 0; }
.tri.pale { color: #8496c8; }

/* Main window header */
.main {
    padding: 0 3px 1px;
    position: relative;
}
.orb {
    position: absolute;
    left: 5px;
    top: 7px;
    width: 38px;
    height: 38px;
}
.main .titlebar {
    padding: 2px 7px 0 44px;
}
.quick {
    display: flex;
    gap: 8px;
    align-items: center;
    height: 22px;
    padding: 0 12px 0 8px;
    border: 1px solid #a9b8d3;
    border-left: 0;
    border-radius: 0 11px 11px 0;
    background: linear-gradient(#e3e9f2, #cdd9ec);
    color: #1f3f7f;
    white-space: nowrap;
}
.quick-more {
    width: 26px;
    padding-left: 5px;
    color: #3c4e7a;
}
.quick-more .tri {
    display: block;
}
.quick-more::before {
    content: "";
    display: block;
    width: 6px;
    height: 1px;
    margin-bottom: 1px;
    background: #3c4e7a;
}
.main .stamp {
    margin-right: 4px;
}
.menubar {
    flex: 0 0 25px;
    display: flex;
    gap: 28px;
    align-items: center;
    padding-left: 59px;
    background: #bfdbff;
    border-bottom: 1px solid #8fb2e8;
    color: #1f3f8f;
    font-family: "Noto Sans", sans-serif;
}

/* Toolbar */
.toolbar {
    flex: 0 0 42px;
    display: flex;
    align-items: flex-start;
    background: #6b91d6;
    border-top: 1px solid #d6e6fd;
    padding: 5px 0 0 4px;
}
.tool-group {
    display: flex;
    flex-wrap: wrap;
    gap: 2px;
    margin-right: 4px;
}
.tool-group:first-child {
    width: 128px;
}
.tool {
    width: 32px;
    height: 28px;
    display: grid;
    place-items: center;
    background: #e1e1e1;
    border: 2px solid;
    border-color: #fff #848ca0 #848ca0 #fff;
}
.tool svg {
    width: 22px;
    height: 22px;
}
.tool.book {
    width: 60px;
    background: #80ff80;
}
.tool.marked {
    box-shadow: 0 -4px #ffffc0;
}
.tool.marked + .marked {
    box-shadow: 0 -4px #ffffc0, -2px -4px #ffffc0;
}
.progress {
    width: 149px;
    flex: 0 0 149px;
    height: 5px;
    background: #0000c8;
}
.vat {
    width: 107px;
    margin: -4px 5px 0 0;
    font-family: "Liberation Mono", monospace;
    font-size: 12px;
}
.vat label {
    display: block;
    padding-left: 10px;
}
.vat .select {
    color: #008000;
    height: 20px;
}
.select {
    position: relative;
    background: #fff;
    color: #00f;
}
.select::after {
    content: "";
    position: absolute;
    right: 5px;
    top: 8px;
    border: 3px solid transparent;
    border-top-color: #5a7ab4;
    border-bottom: 0;
}
.select select {
    width: 100%;
    height: 100%;
    padding: 0 3px;
    appearance: none;
    outline: 0;
}
.order-type {
    width: 86px;
    height: 28px;
    margin: 0 38px 0 30px;
    border: 1px solid #fff;
    border-right-color: #848ca0;
    border-bottom-color: #848ca0;
    background: #6b91d6;
    box-shadow: inset 0 0 0 2px #6b91d6, inset 0 0 0 3px #e8effc;
}
.counters {
    display: grid;
    grid-template-columns: 37px 37px;
    grid-template-rows: 19px 8px;
    gap: 3px 5px;
    margin: 5px 4px 0 0;
}
.counters .red {
    color: #e00000;
}
.chips {
    display: flex;
    gap: 6px;
}
.chips i {
    width: 15px;
    height: 8px;
    flex: none;
}
.chips .green { background: #80ff80; }
.chips .violet { background: #8080ff; }

/* Workspace */
.workspace {
    flex: 1;
    min-height: 0;
    display: grid;
    grid-template-columns: 21px minmax(0, 1fr) 19px 384px 21px;
    background: #6b91d6;
    border-top: 1px solid #7d8db0;
}
.redbar {
    width: 12px;
    height: 447px;
    margin-top: 24px;
    background: #f00;
    border-top: 1px solid #fff;
}
.form {
    min-height: 0;
    overflow: hidden;
    margin-top: 3px;
    background: #cfe2ff;
    border: 1px solid #000;
    border-bottom-color: #5f92dd;
    display: flex;
    flex-direction: column;
}
.form-top {
    flex: 0 0 231px;
    display: flex;
}
.marker {
    width: 18px;
    height: 18px;
    margin: 4px 7px 0 3px;
    background: #ff0;
}
.address {
    width: 290px;
    padding-top: 12px;
    color: #0000c0;
}
.row {
    display: flex;
    align-items: flex-start;
}
.h22 { height: 22px; }
.h24 { height: 24px; }
.h26 { height: 26px; }
.lbl {
    width: 127px;
    height: 21px;
    margin-right: 5px;
    background: #fff;
    color: #f0f;
}
.fld {
    height: calc(100% - 2px);
    padding-left: 1px;
    background: #ffffc0;
}
.fld.mid {
    width: 109px;
    height: 21px;
}
.fld.full {
    width: 241px;
}
.fld.pink {
    background: #ffc0c0;
    color: #000080;
    font-size: 12px;
    font-weight: bold;
}
.city {
    height: 22px;
    gap: 1px;
}
.city .fld {
    width: 26px;
}
.city .fld:nth-child(2) { width: 45px; }
.city .fld:nth-child(3) { width: 167px; }
.currency {
    margin-top: 4px;
}
.hint {
    width: 20px;
    height: 20px;
    flex: none;
    background: #c0c0c0;
    border: 1px solid;
    border-color: #fff #5f92dd #5f92dd #fff;
    font: bold 15px/16px "Liberation Sans", sans-serif;
    color: #ffe800;
    text-shadow: 1px 0 #000, -1px 0 #000, 0 1px #000, 0 -1px #000, 1px 1px #000;
}
.hint.cyan {
    margin-left: 5px;
    height: 23px;
    color: #00e8f0;
}
.drop {
    width: 16px;
    height: 20px;
    padding-left: 2px;
    background: #f0f0f0;
    border: 1px solid #fff;
    border-right-color: #666;
    border-bottom-color: #666;
}
.drop .tri {
    display: block;
    border-width: 4px 4px 0;
    color: #000;
}
.count {
    padding: 6px 0 0 10px;
    color: #000;
}
.address h2 {
    width: 263px;
    height: 27px;
    margin-top: 9px;
    font: bold 19px/26px "Liberation Sans", sans-serif;
    color: #00f;
    background: #fff;
}
.info {
    width: 275px;
    padding-top: 8px;
    color: #0000c0;
}
.info table {
    width: 275px;
}
.info th {
    width: 139px;
    color: #f0f;
}
.info-a td, .info-a th {
    height: 14px;
    line-height: 13px;
    background: #fff;
    border-bottom: 1px solid #cfe2ff;
}
.info-a th {
    border-right: 3px solid #cfe2ff;
}
.info-b {
    margin-top: 1px;
    background: #fff;
    border-right: 1px solid #5f92dd;
    border-bottom: 1px solid #5f92dd;
}
.info-b td, .info-b th {
    height: 16px;
    padding-left: 1px;
    border-bottom: 1px solid #c0c0c0;
}
.info-b th {
    border-right: 1px solid #c0c0c0;
}
.info-b .focus {
    outline: 2px solid #000;
    outline-offset: -1px;
}
.side {
    flex: 1;
    display: flex;
    flex-direction: column;
    padding: 14px 0 0 4px;
}
.flag {
    width: 32px;
    height: 20px;
    display: flex;
    flex-direction: column;
    border: 1px solid #000;
}
.flag i { flex: 1; background: #000; }
.flag i:nth-child(2) { background: #f00; }
.flag i:nth-child(3) { background: #ff0; }
.docbtn {
    align-self: flex-end;
    width: 31px;
    height: 35px;
    margin-top: 17px;
    background: #e1e1e1;
    border: 1px solid #fff;
    border-bottom-color: #5f92dd;
}
.docbtn svg {
    width: 16px;
    height: 16px;
}
.checks {
    display: grid;
    grid-template-columns: 66px 60px;
    gap: 2px 0;
    margin-top: 4px;
}
.checks label {
    display: flex;
    align-items: center;
    gap: 6px;
}
.checks input {
    width: 12px;
    height: 12px;
    appearance: none;
    background: #fff;
    border: 1px solid #eee;
    border-top: 2px solid #555;
    border-left: 2px solid #555;
}

/* Lower part of the form */
.form-main {
    flex: 1;
    min-height: 0;
    display: grid;
    grid-template-columns: 28px minmax(0, 1fr) 33px;
    overflow: hidden;
}
.form-icons svg {
    display: block;
    width: 28px;
    height: 32px;
    margin-top: 200px;
}
.form-icons svg + svg {
    width: 24px;
    height: 28px;
    margin: 13px 0 0 1px;
}
.form-content {
    min-height: 0;
    overflow: hidden;
}
.refs {
    width: 100%;
    background: #fff;
    border-bottom: 1px solid #5f92dd;
    color: #0000c0;
}
.refs th, .refs td {
    height: 16px;
    padding-left: 2px;
    border-right: 1px solid #c0c0c0;
    border-bottom: 1px solid #c0c0c0;
}
.refs th { color: #f0f; }
.refs th:nth-child(1) { width: 102px; }
.refs th:nth-child(2) { width: 97px; }
.refs th:nth-child(3) { width: 118px; }
.refs .strong {
    color: #f00;
    font-weight: bold;
    font-size: 12px;
}
.intro {
    height: 37px;
    margin-top: 4px;
    padding-top: 1px;
    font-size: 10px;
    background: #fff;
    color: #0000c0;
}
.items {
    height: 338px;
    display: flex;
    flex-direction: column;
    background: #fff;
    border: 1px solid #000;
}
.items table {
    width: 100%;
    background: #bfdbff;
}
.items th {
    height: 32px;
    text-align: center;
    border-right: 1px solid #5f92dd;
    border-bottom: 1px solid #000;
}
.items .pos { width: 25px; background: #ffc774; }
.items .qty { width: 49px; }
.items .unit { width: 73px; }
.items .name { width: 217px; }
.items-body {
    flex: 1;
    display: flex;
    justify-content: flex-end;
}
.vbar {
    width: 16px;
    display: flex;
    flex-direction: column;
    align-items: center;
    justify-content: space-between;
    padding: 5px 0;
    background: linear-gradient(90deg, #e6e6e6, #f4f4f4);
}
.hbar {
    height: 16px;
    display: flex;
    align-items: center;
    background: linear-gradient(#f4f4f4, #e9e9e9);
}
.hbar .tri {
    margin: 0 5px;
}
.hbar .right {
    margin-left: auto;
}
.hbar b {
    width: 15px;
    height: 16px;
    background: #86a9da;
}
.hbar .thumb {
    width: 539px;
    height: 15px;
    display: flex;
    align-items: center;
    justify-content: center;
    border: 1px solid #5f7398;
    border-radius: 2px;
    background: linear-gradient(#f2f4f8, #d4dbe6 50%, #b4c2d6);
}
.hbar .thumb i {
    width: 8px;
    height: 7px;
    background: repeating-linear-gradient(90deg, #7a8090 0 1px, transparent 1px 2px);
}
.vbar .thumb {
    width: 16px;
    display: flex;
    align-items: center;
    justify-content: center;
    border: 1px solid #5f7398;
    border-radius: 2px;
    background: linear-gradient(90deg, #f2f4f8, #d4dbe6 50%, #b4c2d6);
}
.vbar .thumb i {
    width: 8px;
    height: 7px;
    background: repeating-linear-gradient(#7a8090 0 1px, transparent 1px 2px);
}
.main-scroll {
    width: 18px;
    margin-left: 1px;
    padding: 5px 0 6px;
}
.main-scroll .thumb {
    height: 73px;
    margin: 5px 0 auto;
}
.flags {
    width: 255px;
    height: 83px;
    margin-top: 5px;
    display: flex;
    background: #fff;
    border: 1px solid #000;
}
.flags table {
    width: 236px;
}
.flags th {
    height: 33px;
    text-align: center;
    background: #bfdbff;
    border-right: 1px solid #000;
    border-bottom: 1px solid #000;
    box-shadow: inset 1px 1px #e3efff, inset -1px -1px #5f92dd;
}
.f-pos { width: 34px; }
.f-a { width: 60px; }
.f-b { width: 61px; }
.flags td {
    height: 16px;
    text-align: center;
    color: #00f;
    line-height: 12px;
    border-right: 1px solid #c0c0c0;
    border-bottom: 1px solid #c0c0c0;
}
.flags td:last-child { border-right-color: #000; }
.flags .focus {
    outline: 2px solid #000;
    outline-offset: -1px;
}
.flags input {
    display: block;
    width: 13px;
    height: 13px;
    margin: 0 auto;
    appearance: none;
    background: #c0c0c0;
    border: 1px solid #c0c0c0;
    box-shadow: inset 1px 1px #fff, inset -1px -1px #777;
}
.flags .vbar {
    width: 17px;
    padding: 4px 0;
}
.flags .thumb {
    height: 16px;
    margin: 3px 0 auto;
}
.sums {
    display: flex;
    gap: 7px;
    margin-top: 13px;
    white-space: nowrap;
    color: #f0f;
}
.sums span {
    width: 109px;
    height: 22px;
    background: #fff;
}
.sums span:nth-child(2) { width: 110px; margin-right: 2px; }
.sums span:nth-child(3) { width: 109px; margin-right: 2px; }
.sums span:nth-child(4) { width: 137px; margin-right: 3px; }
.form-side {
    display: flex;
    flex-direction: column;
    gap: 3px;
    padding: 300px 0 0 3px;
}
.sq {
    width: 25px;
    height: 25px;
    background: #e1e1e1;
    border: 2px solid #fff;
    border-right-color: #5f80b8;
    border-bottom-color: #5f80b8;
    font-weight: bold;
    font-size: 12px;
}
.sq.blue { background: #6b91d6; }
.sq.redsq {
    margin-top: auto;
    background: #f00;
    font-weight: normal;
}

/* Stock area */
.stock {
    display: flex;
    flex-direction: column;
    border-right: 2px solid #fff;
    min-height: 0;
}
.stock-table {
    width: 270px;
    height: 190px;
    margin-top: 1px;
    display: flex;
    flex-direction: column;
    background: #fff;
    border: 1px solid #000;
}
.stock-area {
    flex: 1;
    display: flex;
    justify-content: space-between;
}
.stock-table table {
    align-self: flex-start;
    width: 246px;
    margin-top: 1px;
}
.stock-table th {
    height: 16px;
    text-align: center;
    background: #bfdbff;
    border-right: 1px solid #5f92dd;
    border-bottom: 1px solid #5f92dd;
}
.stock-table th:nth-child(1) { width: 24px; }
.stock-table th:nth-child(5) { width: 35px; }
.stock-table th:nth-child(7) { width: 43px; }
.stock-table .hbar b { background: #a6cbf8; }
.stock-blank {
    width: 270px;
    height: 223px;
    background: #fff;
    border-left: 1px solid #000;
    border-right: 1px solid #000;
}
.stock-scroll {
    width: 269px;
    height: 15px;
}
.stock-scroll .thumb {
    width: 35px;
}
.chart {
    width: 265px;
    height: 160px;
    margin: auto 0 0 2px;
    font-family: "Noto Sans", sans-serif;
    font-size: 11px;
}
.chart .green { fill: #006400; }
.edge {
    padding: 0 0 0 9px;
}
.bluebar {
    height: 445px;
    margin-top: -1px;
    background: #00f;
    border-left: 1px solid #fff;
    border-top: 1px solid #fff;
}

/* Bottom bars */
.tabs {
    flex: 0 0 23px;
    display: flex;
    gap: 3px;
    padding: 3px 0 1px 7px;
    background: #bfdbff;
    border-top: 2px solid #6b91d6;
    border-right: 28px solid #6b91d6;
    border-bottom: 1px solid #6b91d6;
}
.tabs button, .cell {
    display: flex;
    align-items: center;
    justify-content: center;
    border: 1px solid #5f92dd;
    border-right-color: #fff;
    border-bottom: 0;
    white-space: nowrap;
}
.tabs svg { width: 14px; height: 14px; }
.tabs button:disabled, .off { color: #9a9a9a; }
.w78 { width: 78px; }
.w108 { width: 108px; }
.w95 { width: 95px; }
.w38 { width: 38px; }
.w31 { width: 31px; }
.w34 { width: 34px; }
.w58 { width: 58px; }
.gray { background: #c0c0c0; }
.beige { background: #d6d6ce; }
.status {
    flex: 0 0 20px;
    display: flex;
    background: #cfe2ff;
}
.message {
    flex: 1;
    margin: 1px 0;
    border: 1px solid #5f92dd;
    background: linear-gradient(#c8cdd8, #dfe3ee 50%);
}
.keys {
    width: 114px;
    display: flex;
    align-items: center;
    gap: 11px;
    padding-left: 15px;
    background: linear-gradient(#bcd6fa, #8fb5ea 40%, #7398cc);
    font-family: "Noto Sans", sans-serif;
    color: #15306f;
}
.keys .dim { color: #a3a9b3; }
.keys svg {
    width: 12px;
    height: 12px;
}

/* Dialog */
.dialog {
    position: absolute;
    left: 632px;
    top: 269px;
    width: 432px;
    height: 362px;
    display: flex;
    flex-direction: column;
    background: #cfe2ff;
    border: 1px solid #3c5a8c;
    border-radius: 7px 7px 0 0;
    box-shadow: inset 0 0 0 3px #b4cff5;
}
.dialog-title {
    flex: 0 0 28px;
    display: flex;
    align-items: center;
    padding: 4px 10px 0 5px;
    border-bottom: 1px solid #a9c8f3;
    border-radius: 6px 6px 0 0;
    background: linear-gradient(#c9dffc, #dbe9fd 50%, #e4effe);
    font-family: "Noto Sans", sans-serif;
    color: #6f7684;
}
.dlgicon {
    width: 16px;
    height: 16px;
    margin-right: 4px;
}
.dialog-title h2 {
    flex: 1;
    font-size: 12px;
    font-weight: normal;
}
.dialog-title .stamp {
    margin-right: 49px;
}
.close svg { stroke: #7f93b5; }
.dialog-body {
    display: flex;
    justify-content: space-between;
    padding: 6px 22px 0 11px;
}
fieldset {
    border: 1px solid #8a8a8a;
    box-shadow: 1px 1px #fff, inset 1px 1px #fff;
    min-width: 0;
}
legend {
    padding: 0 2px;
}
.addr {
    width: 248px;
    height: 247px;
    padding: 4px 6px 0 7px;
}
.line {
    display: flex;
    align-items: center;
    height: 20px;
    margin-bottom: 8px;
}
.line label {
    width: 98px;
    padding-left: 2px;
    white-space: nowrap;
}
.input {
    width: 208px;
    height: 20px;
    padding: 0 2px;
    background: #fff;
    border: 1px solid #eee;
    border-top: 2px solid #6f6f6f;
    border-left: 2px solid #6f6f6f;
    color: #00f;
    outline: 0;
}
.line .hint {
    margin-left: 4px;
}
.hint svg {
    display: block;
    width: 14px;
    height: 16px;
    margin: 0 auto;
}
.input.num {
    display: flex;
    align-items: center;
    width: 110px;
    padding: 0 1px;
}
.input.num input {
    flex: 1;
    min-width: 0;
    width: 0;
    outline: 0;
}
mark {
    background: #8ea9d4;
    color: #000;
    border-right: 1px solid #000;
}
.select.wide {
    width: 208px;
    height: 20px;
    border: 1px solid #5f92dd;
}
.place { gap: 4px; }
.place .input { width: 24px; padding: 0 1px; }
.place .input:nth-child(2) { width: 44px; }
.place .input:nth-child(3) { width: 132px; }
.addr p {
    margin: -2px 0 25px;
    color: #00f;
}
.transfer {
    width: 230px;
    height: 21px;
    border: 1px solid #5f92dd;
    border-radius: 2px;
    background: linear-gradient(#e0eeff, #bcd8fb);
    white-space: nowrap;
}
.dialog-side {
    width: 137px;
}
.help {
    display: flex;
    justify-content: space-between;
    padding: 5px 10px 0 1px;
    height: 45px;
}
.bighelp {
    font: bold 34px/24px "Liberation Sans", sans-serif;
    color: #e81010;
    transform: rotate(8deg);
    text-shadow: 1px 1px #900, 2px 2px 1px #999;
}
.search {
    height: 202px;
    padding: 9px 0 0 7px;
}
.opt {
    display: flex;
    align-items: center;
    height: 20px;
    white-space: nowrap;
}
.opt span {
    width: 38px;
}
.opt input {
    width: 12px;
    height: 12px;
    margin: 0 6px 0 4px;
    appearance: none;
    background: #fff;
    border: 1px solid #777;
    border-right-color: #eee;
    border-bottom-color: #eee;
    border-radius: 50%;
}
.opt input:checked {
    background: radial-gradient(circle, #000 2px, #fff 3px);
}
.cap {
    display: block;
    margin: 8px 0 3px;
}
.search .select {
    width: 121px;
    height: 21px;
}
.dialog-actions {
    display: flex;
    justify-content: flex-end;
    gap: 9px;
    margin-top: auto;
    padding: 0 22px 7px 0;
}
.big {
    height: 57px;
    width: 113px;
    background: #e1e1e1;
    border: 2px solid #fff;
    border-right-color: #6f8fc4;
    border-bottom-color: #6f8fc4;
}
.big.insert { width: 125px; }
.big svg {
    display: block;
    width: 32px;
    height: 30px;
    margin: 2px auto 4px;
}
.cursor {
    position: absolute;
    left: 234px;
    top: 217px;
    width: 18px;
    height: 30px;
}
```
